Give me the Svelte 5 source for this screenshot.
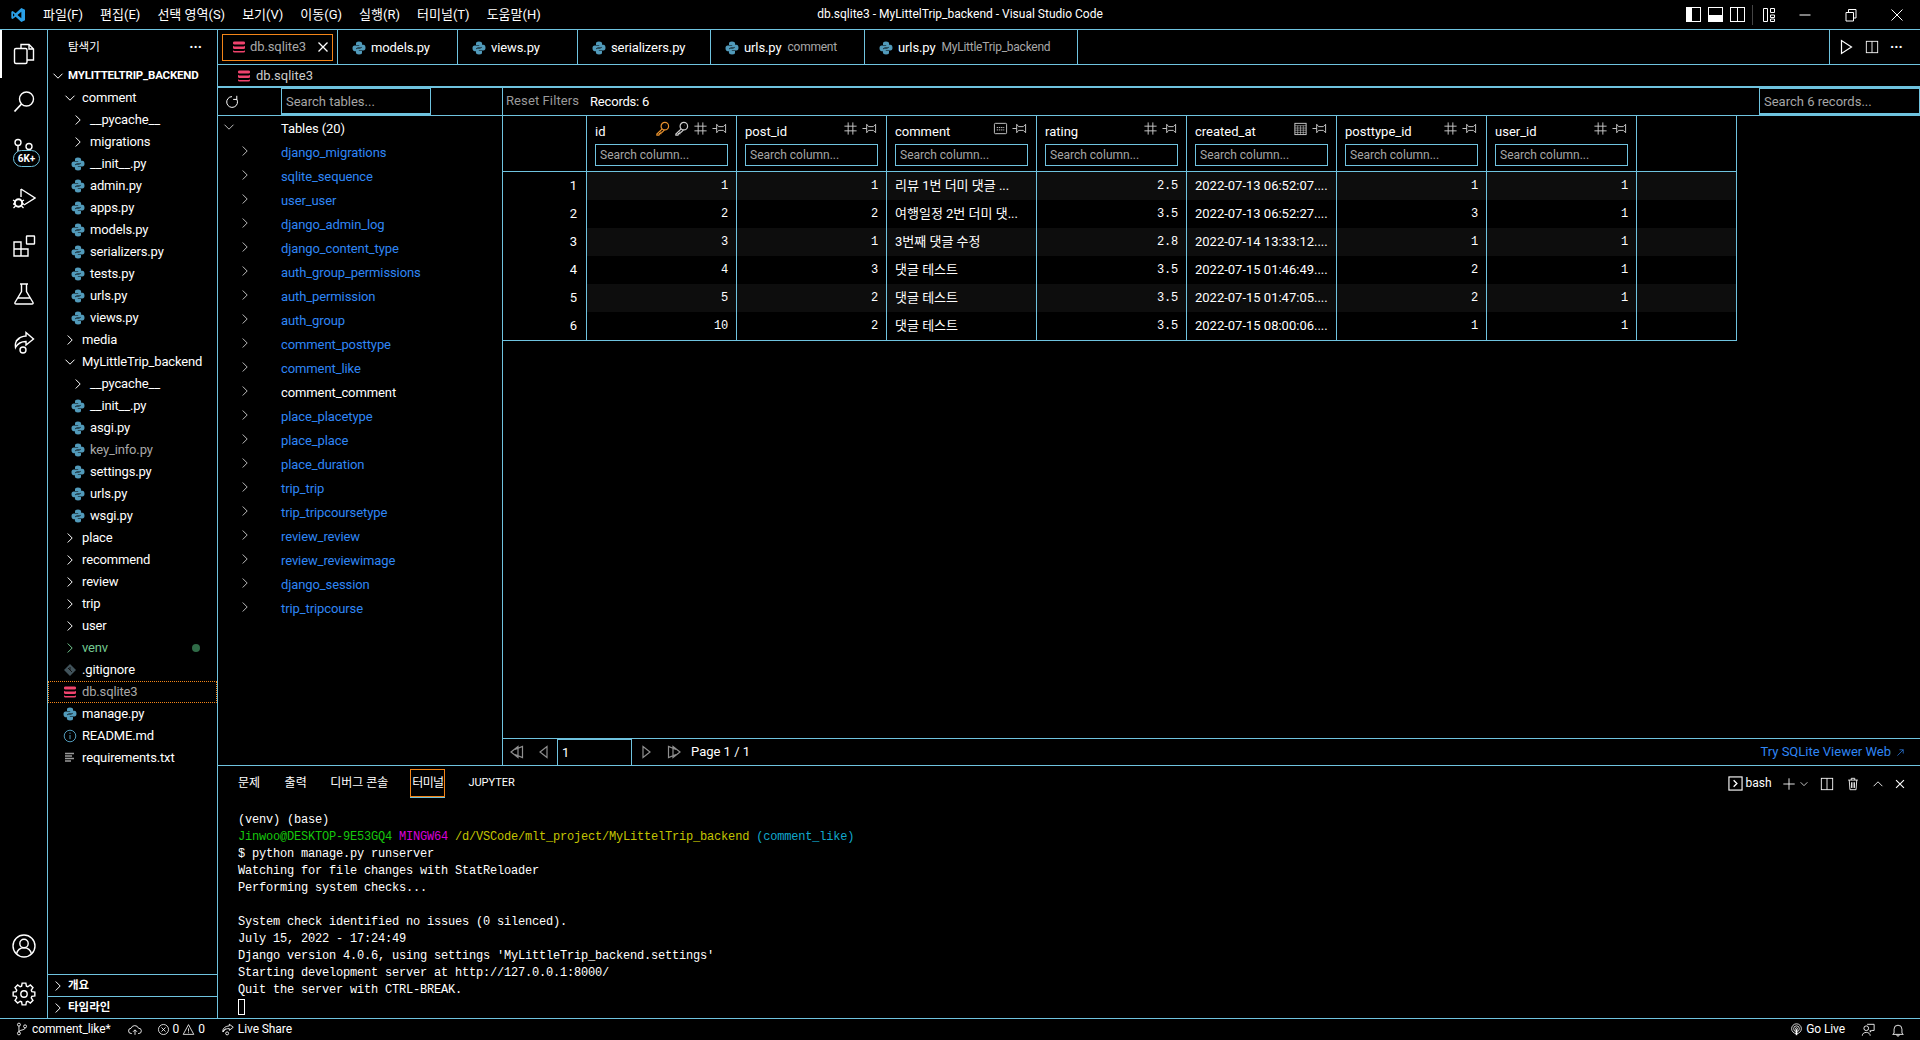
<script>
  const menus = ['파일(F)', '편집(E)', '선택 영역(S)', '보기(V)', '이동(G)', '실행(R)', '터미널(T)', '도움말(H)'];
  const tabs = [
    { name: 'models.py', w: 120 },
    { name: 'views.py', w: 120 },
    { name: 'serializers.py', w: 133 },
    { name: 'urls.py', sub: 'comment', w: 154 },
    { name: 'urls.py', sub: 'MyLittleTrip_backend', w: 213 }
  ];
  const files = [
    ['comment', 1, 'open'], ['__pycache__', 2, 'closed'], ['migrations', 2, 'closed'],
    ['__init__.py', 2, 'py'], ['admin.py', 2, 'py'], ['apps.py', 2, 'py'], ['models.py', 2, 'py'],
    ['serializers.py', 2, 'py'], ['tests.py', 2, 'py'], ['urls.py', 2, 'py'], ['views.py', 2, 'py'],
    ['media', 1, 'closed'], ['MyLittleTrip_backend', 1, 'open'], ['__pycache__', 2, 'closed'],
    ['__init__.py', 2, 'py'], ['asgi.py', 2, 'py'], ['key_info.py', 2, 'py', 'dim'], ['settings.py', 2, 'py'],
    ['urls.py', 2, 'py'], ['wsgi.py', 2, 'py'], ['place', 1, 'closed'], ['recommend', 1, 'closed'],
    ['review', 1, 'closed'], ['trip', 1, 'closed'], ['user', 1, 'closed'], ['venv', 1, 'closed', 'venv'],
    ['.gitignore', 1, 'git'], ['db.sqlite3', 1, 'db', 'sel'], ['manage.py', 1, 'py'],
    ['README.md', 1, 'info'], ['requirements.txt', 1, 'lines']
  ];
  const tables = ['django_migrations', 'sqlite_sequence', 'user_user', 'django_admin_log', 'django_content_type',
    'auth_group_permissions', 'auth_permission', 'auth_group', 'comment_posttype', 'comment_like', 'comment_comment',
    'place_placetype', 'place_place', 'place_duration', 'trip_trip', 'trip_tripcoursetype', 'review_review',
    'review_reviewimage', 'django_session', 'trip_tripcourse'];
  const columns = [
    { name: 'id', icons: ['keyo', 'key', 'hash'] }, { name: 'post_id', icons: ['hash'] },
    { name: 'comment', icons: ['abc'] }, { name: 'rating', icons: ['hash'] },
    { name: 'created_at', icons: ['cal'] }, { name: 'posttype_id', icons: ['hash'] }, { name: 'user_id', icons: ['hash'] }
  ];
  const rows = [
    ['1', '1', '리뷰 1번 더미 댓글 ...', '2.5', '2022-07-13 06:52:07....', '1', '1'],
    ['2', '2', '여행일정 2번 더미 댓...', '3.5', '2022-07-13 06:52:27....', '3', '1'],
    ['3', '1', '3번째 댓글 수정', '2.8', '2022-07-14 13:33:12....', '1', '1'],
    ['4', '3', '댓글 테스트', '3.5', '2022-07-15 01:46:49....', '2', '1'],
    ['5', '2', '댓글 테스트', '3.5', '2022-07-15 01:47:05....', '2', '1'],
    ['10', '2', '댓글 테스트', '3.5', '2022-07-15 08:00:06....', '1', '1']
  ];
  const isText = (c) => c === 2 || c === 4;
  const gear = (() => {
    let d = '';
    for (let i = 0; i < 8; i++) {
      const a = (i * Math.PI) / 4;
      const p = (r, o) => `${(12 + r * Math.cos(a + o)).toFixed(2)} ${(12 + r * Math.sin(a + o)).toFixed(2)}`;
      d += `${i ? 'L' : 'M'}${p(8.2, -0.3)}L${p(11, -0.17)}L${p(11, 0.17)}L${p(8.2, 0.3)}`;
    }
    return d + 'Z';
  })();
</script>

{#snippet ic(name, size = 16)}
  <svg class="ic" width={size} height={size} viewBox="0 0 16 16">
    {#if name === 'right'}<path d="M5.700 3.500 10.200 8l-4.500 4.500"/>
    {:else if name === 'down'}<path d="M3.500 5.700 8 10.200l4.500-4.500"/>
    {:else if name === 'up'}<path d="M3 10.500 8 5.500l5 5"/>
    {:else if name === 'x'}<path d="m3.500 3.500 9 9m0-9-9 9" stroke-width="1.300"/>
    {:else if name === 'py'}
      <g class="solid py"><path d="M8 1.500c-2.700 0-3 1-3 2V5h3.200v.6H3.600c-1.300 0-2.100 1-2.100 2.700s.8 2.900 2.100 2.900H5V9.600c0-1.100.9-2 2-2h2.400c1 0 1.700-.7 1.700-1.600V3.500c0-1.200-1.200-2-3.100-2z"/><path transform="rotate(180 8 8)" d="M8 1.500c-2.700 0-3 1-3 2V5h3.200v.6H3.600c-1.300 0-2.100 1-2.100 2.700s.8 2.900 2.100 2.900H5V9.600c0-1.100.9-2 2-2h2.400c1 0 1.700-.7 1.700-1.600V3.500c0-1.200-1.200-2-3.100-2z"/></g>
    {:else if name === 'db'}
      <g class="solid db"><path d="M3.500 2.500h9q1.500 0 1.500 1v1q0 1-1.500 1h-9Q2 5.500 2 4.500v-1q0-1 1.500-1zM2 6.800q.6.700 1.500.7h9q.9 0 1.500-.7v2.200q0 .9-1.500.9h-9Q2 9.900 2 9zM2 11.200q.6.700 1.500.7h9q.9 0 1.500-.7v1.300q0 1-1.500 1h-9Q2 13.500 2 12.500z"/></g>
    {:else if name === 'git'}
      <g class="solid gitc"><path d="M8 2 14 8 8 14 2 8z"/></g><path d="M6 6l4 4M8 8V5" stroke="#111"/>
    {:else if name === 'info'}
      <g class="infoc"><circle cx="8" cy="8" r="5.800"/><path d="M8 7v4.200M8 4.600v1.200"/></g>
    {:else if name === 'lines'}
      <path class="linesc" d="M3 3.500h9M3 6h7M3 8.500h9M3 11h6" stroke-width="1.300"/>
    {:else if name === 'refresh'}<path d="M12.600 5A5.400 5.400 0 1 1 8 2.600M12.800 1.800V5.400H9.200" />
    {:else if name === 'hash'}<path d="M5.500 1.500v13M10.500 1.500v13M1.500 5.500h13M1.500 10.500h13"/>
    {:else if name === 'pin'}<path d="M.5 8H5M5 3.500 7 6h5l2.500-2.500v9L12 10H7l-2 2.500z"/>
    {:else if name === 'key' || name === 'keyo'}
      <g class={name === 'keyo' ? 'orange' : ''} stroke-width="1.300"><circle cx="10.500" cy="5.500" r="4"/><path d="M7.700 8.400 2 14v1h2.200l.6-1.500h1.500V12h1.500L10 9.500"/><path d="M11.500 4.500h.2"/></g>
    {:else if name === 'abc'}
      <rect x="1.500" y="2.500" width="13" height="11" rx="1"/><path d="M4 9.500h8M4 7h8" stroke-dasharray="1.500 .8"/>
    {:else if name === 'cal'}
      <rect x="2" y="2.500" width="12" height="12"/><path d="M2 5h12M2 7.500h12M2 9.800h12M2 12.200h12M5 5v9.500M8 5v9.500M11 5v9.500" stroke-width=".6"/>
    {:else if name === 'split'}<rect x="1.500" y="1.500" width="13" height="13"/><path d="M8 1.500v13"/>
    {:else if name === 'play'}<path d="M3.500 1.500v13L13.500 8z" stroke-width="1.200"/>
    {:else if name === 'first'}<path d="M2 8 9 2.500v11zM6 5.500 13.500 2.500v11L6 10.500" stroke-width="1.200"/>
    {:else if name === 'prev'}<path d="M11 2.500 4 8l7 5.500z" stroke-width="1.200"/>
    {:else if name === 'next'}<path d="M5 2.500 12 8l-7 5.500z" stroke-width="1.200"/>
    {:else if name === 'last'}<path d="M14 8 7 2.500v11zM10 5.500 2.500 2.500v11l7.500-3" stroke-width="1.200"/>
    {:else if name === 'term'}<rect x="1" y="1" width="14" height="14" stroke-width="1.200"/><path d="m6 4.500 3.500 3.500L6 11.500" stroke-width="1.400"/>
    {:else if name === 'plus'}<path d="M8 1.500v13M1.500 8h13"/>
    {:else if name === 'trash'}<path d="M2.500 3.500h11M6 3.500V1.500h4v2M3.700 3.500l.8 11h7l.8-11M6.300 6v6.500M8 6v6.500M9.700 6v6.500"/>
    {:else if name === 'branch'}<circle cx="4.500" cy="3" r="1.700"/><circle cx="4.500" cy="13" r="1.700"/><circle cx="11.500" cy="5" r="1.700"/><path d="M4.500 4.700v6.600M11.500 6.700c0 3-7 2-7 4.600"/>
    {:else if name === 'cloud'}<path d="M4.500 12H3.800A3 3 0 0 1 3.500 6 4.500 4.500 0 0 1 12 6a3 3 0 0 1 .5 6h-1M8 13.500V8M5.800 10 8 7.800l2.200 2.200"/>
    {:else if name === 'err'}<circle cx="8" cy="8" r="6.200"/><path d="m5.500 5.500 5 5m0-5-5 5"/>
    {:else if name === 'warn'}<path d="M8 2 14.500 14h-13zM8 6.500v4M8 11.500v1"/>
    {:else if name === 'share'}<path d="M9.500 2.500 14 6l-4.500 3.500V7.500C6 7.500 3.500 8.500 2 11c0-4 3-6.300 7.500-6.500zM5.600 7.800C4 8.500 3 10 2.500 11.500"/><circle cx="7" cy="13" r="1.700"/>
    {:else if name === 'golive'}<circle cx="8" cy="7" r="6"/><circle cx="8" cy="7" r="3.500"/><circle cx="8" cy="7" r="1.200"/><path d="M8 8v7" stroke-width="2"/>
    {:else if name === 'feedback'}<circle cx="6" cy="6" r="2.700"/><path d="M1.500 14.500c0-5 9-5 9 0M7 1.500h8v7h-3l-1.500 2V8"/>
    {:else if name === 'bell'}<path d="M3.500 11.500V7a4.500 4.500 0 0 1 9 0v4.500l1.500 1.500H2zM6.500 13.500a1.500 1.500 0 0 0 3 0"/>
    {:else if name === 'ext'}<path d="M3.500 12.500 12 4M6.500 4H12v5.500"/>
    {/if}
  </svg>
{/snippet}

{#snippet big(name)}
  <svg class="ic bigic" width="24" height="24" viewBox="0 0 24 24">
    {#if name === 'files'}<path d="M9 6V2.500h8l4.500 4.500v11H15M17 2.500V7h4.500"/><rect x="2.500" y="6.500" width="12.500" height="15" rx="1.500"/>
    {:else if name === 'search'}<circle cx="14.500" cy="9" r="7"/><path d="M9.500 14 2.500 21.500" stroke-width="1.800"/>
    {:else if name === 'scm'}<circle cx="6" cy="4.500" r="3"/><circle cx="17" cy="8.500" r="3"/><path d="M6 7.500v8"/>
    {:else if name === 'debug'}<path d="M9 3v8M9 3l14 9-11 7"/><circle cx="6.500" cy="17" r="3.700" stroke-width="2"/><path d="M1 14l2.500 1.500M1 18h2M1.500 22 3.500 20M12 14l-2.500 1.500M12 18h-2M11.500 22l-2-2" stroke-width="1.300"/>
    {:else if name === 'ext'}<path d="M2 8h7v14H2zM2 15h14v7H9"/><rect x="14.500" y="2" width="8" height="8" rx=".5"/>
    {:else if name === 'test'}<path d="M8 2h8M9.500 2v7.500L3 20.500q-.5 1.500 1 1.500h16q1.500 0 1-1.500L14.500 9.500V2M6 16h12"/>
    {:else if name === 'live'}<path d="M14 2.500 21.500 9 14 15v-3.500c-5 0-8 1.500-10.500 6C2.500 11 6.500 6.500 14 6z"/><circle cx="11" cy="20" r="3"/><path d="M7.500 8.500 4 11"/>
    {:else if name === 'account'}<circle cx="12" cy="12" r="11"/><circle cx="12" cy="9.500" r="4.200"/><path d="M4.500 20c1-4.500 4-6.300 7.500-6.300s6.500 1.800 7.500 6.300"/>
    {:else if name === 'gear'}<path d={gear}/><circle cx="12" cy="12" r="3.200"/>
    {/if}
  </svg>
{/snippet}

<div class="app">
  <header class="titlebar">
    <div class="menus">
      <svg class="logo" width="16" height="16" viewBox="0 0 24 24"><path fill-rule="evenodd" d="M17 1.500 22.500 4v16L17 22.500 8.500 14.500 4 18l-2-1V7l2-1 4.500 3.500zM17 7l-5.800 5 5.800 5zM4.500 9.500v5L7 12z"/></svg>
      <nav>{#each menus as m}<span>{m}</span>{/each}</nav>
    </div>
    <div class="wintitle">db.sqlite3 - MyLittelTrip_backend - Visual Studio Code</div>
    <div class="winctl">
      <span class="lay"><i class="fill-l"></i></span><span class="lay"><i class="fill-b"></i></span><span class="lay"><i class="mid"></i></span>
      <b class="sep"></b>
      <svg class="ic" width="14" height="16" viewBox="0 0 14 16"><path d="M1.500 1.500h4v13h-4zM8.500 1.500h4v4h-4zM8.500 8h4v2.500h-4zM8.500 12h4v2.500h-4z"/></svg>
      <svg class="ic mn" width="14" height="14" viewBox="0 0 14 14"><path d="M1.500 7h11"/></svg>
      <svg class="ic mn2" width="14" height="14" viewBox="0 0 14 14"><path d="M2 4.500h7.500V13H2zM4.500 4.500V1.500H12V10H9.500"/></svg>
      <svg class="ic mn2" width="14" height="14" viewBox="0 0 14 14"><path d="m1.500 1.500 11 11m0-11-11 11"/></svg>
    </div>
  </header>

  <div class="main">
    <aside class="activity">
      <div class="act active">{@render big('files')}</div>
      <div class="act">{@render big('search')}</div>
      <div class="act">{@render big('scm')}<span class="badge">6K+</span></div>
      <div class="act">{@render big('debug')}</div>
      <div class="act">{@render big('ext')}</div>
      <div class="act">{@render big('test')}</div>
      <div class="act">{@render big('live')}</div>
      <div class="grow"></div>
      <div class="act">{@render big('account')}</div>
      <div class="act">{@render big('gear')}</div>
    </aside>

    <aside class="sidebar">
      <div class="sb-head"><span>탐색기</span><span class="dots">···</span></div>
      <div class="tree">
        <div class="row root">{@render ic('down')}<span>MYLITTELTRIP_BACKEND</span></div>
        {#each files as f}
          <div class="row d{f[1]} {f[3] ?? ''}">
            {#if f[2] === 'open'}{@render ic('down')}{:else if f[2] === 'closed'}{@render ic('right')}{:else}{@render ic(f[2])}{/if}
            <span>{f[0]}</span>
            {#if f[3] === 'venv'}<i class="dot"></i>{/if}
          </div>
        {/each}
      </div>
      <div class="section">{@render ic('right')}<span>개요</span></div>
      <div class="section">{@render ic('right')}<span>타임라인</span></div>
    </aside>

    <section class="workbench">
      <div class="tabbar">
        <div class="tab active"><div class="tabbox">{@render ic('db')}<span>db.sqlite3</span>{@render ic('x')}</div></div>
        {#each tabs as t}
          <div class="tab" style="width:{t.w}px">{@render ic('py')}<span>{t.name}</span>{#if t.sub}<em>{t.sub}</em>{/if}</div>
        {/each}
        <div class="grow"></div>
        <div class="tabacts">{@render ic('play')}{@render ic('split', 14)}<span class="dots">···</span></div>
      </div>
      <div class="crumbs">{@render ic('db')}<span>db.sqlite3</span></div>

      <div class="viewer">
        <div class="toolbar">
          <div class="tb-left">
            {@render ic('refresh')}
            <input class="search-t" placeholder="Search tables..." />
          </div>
          <div class="tb-right">
            <span class="reset">Reset Filters</span>
            <span class="records">Records: 6</span>
            <div class="grow"></div>
            <input class="search-r" placeholder="Search 6 records..." />
          </div>
        </div>

        <div class="vbody">
          <div class="tablelist">
            <div class="trow head">{@render ic('down')}<span>Tables (20)</span></div>
            {#each tables as t}
              <div class="trow">{@render ic('right')}<span class:cur={t === 'comment_comment'}>{t}</span></div>
            {/each}
          </div>
          <div class="datapane">
            <div class="gridwrap">
              <div class="grid">
                <div class="hc first"></div>
                {#each columns as c}
                  <div class="hc">
                    <div class="hname"><span>{c.name}</span><div class="hicons">{#each c.icons as i}{@render ic(i, 15)}{/each}{@render ic('pin', 15)}</div></div>
                    <input placeholder="Search column..." />
                  </div>
                {/each}
                <div class="hc last"></div>
                {#each rows as r, i}
                  <div class="c num">{i + 1}</div>
                  {#each r as v, c}
                    <div class="c" class:odd={i % 2 === 0} class:txt={isText(c)} class:mono={!isText(c)}>{v}</div>
                  {/each}
                  <div class="c last" class:odd={i % 2 === 0}></div>
                {/each}
              </div>
            </div>
            <div class="pager">
              {@render ic('first')}{@render ic('prev')}
              <input value="1" />
              {@render ic('next')}{@render ic('last')}
              <span class="pg">Page 1 / 1</span>
              <div class="grow"></div>
              <span class="try">Try SQLite Viewer Web {@render ic('ext', 11)}</span>
            </div>
          </div>
        </div>
      </div>

      <div class="panel">
        <div class="ptabs">
          <span>문제</span><span>출력</span><span>디버그 콘솔</span><span class="on">터미널</span><span class="jup">JUPYTER</span>
          <div class="grow"></div>
          <div class="pacts">
            {@render ic('term', 15)}<span class="bash">bash</span>{@render ic('plus', 14)}{@render ic('down', 12)}{@render ic('split', 14)}{@render ic('trash', 14)}{@render ic('up', 14)}{@render ic('x', 14)}
          </div>
        </div>
<pre class="term">(venv) (base)
<span class="g">Jinwoo@DESKTOP-9E53GQ4</span> <span class="m">MINGW64</span> <span class="y">/d/VSCode/mlt_project/MyLittelTrip_backend</span> <span class="c2">(comment_like)</span>
$ python manage.py runserver
Watching for file changes with StatReloader
Performing system checks...

System check identified no issues (0 silenced).
July 15, 2022 - 17:24:49
Django version 4.0.6, using settings 'MyLittleTrip_backend.settings'
Starting development server at http://127.0.0.1:8000/
Quit the server with CTRL-BREAK.
<i class="cursor"></i></pre>
      </div>
    </section>
  </div>

  <footer class="status">
    <span class="st br">{@render ic('branch', 14)}comment_like*</span>
    <span class="st cl">{@render ic('cloud', 14)}</span>
    <span class="st er">{@render ic('err', 13)}0{@render ic('warn', 13)}0</span>
    <span class="st ls">{@render ic('share', 14)}Live Share</span>
    <div class="grow"></div>
    <span class="st gl">{@render ic('golive', 13)}Go Live</span>
    <span class="st fb">{@render ic('feedback', 14)}</span>
    <span class="st bl">{@render ic('bell', 14)}</span>
  </footer>
</div>

<style>
  :global(body) { margin: 0; background: #000; }
  * { box-sizing: border-box; }
  .app {
    width: 1920px; height: 1040px; background: #000; color: #fff; overflow: hidden;
    display: flex; flex-direction: column;
    font: 13px/1.2 Roboto, "Noto Sans CJK KR", sans-serif;
    --b: #6fc3df; --o: #f38518; --dim: #9a9a9a; --link: #2f86f5;
  }
  .grow { flex: 1; }
  .ic { fill: none; stroke: currentColor; stroke-width: 1; flex: none; display: block; }
  .bigic { stroke-width: 1.400; }
  .solid { stroke: none; }
  .py { fill: #519aba; }
  .db { fill: #f0436d; }
  .gitc { fill: #41535b; }
  .infoc { stroke: #519aba; }
  .linesc { stroke: #9a9a9a; }
  .orange { stroke: #e8912d; }
  input {
    font: inherit; color: #fff; background: #000; border: 1px solid var(--b); outline: none; padding: 0 4px; min-width: 0;
  }
  input::placeholder { color: #a6a6a6; opacity: 1; }

  .titlebar {
    height: 30px; flex: none; border-bottom: 1px solid var(--b);
    display: grid; grid-template-columns: 1fr auto 1fr; align-items: center; font-size: 12px;
  }
  .menus { display: flex; align-items: center; padding-left: 10px; }
  .logo { fill: #2aa0e8; flex: none; }
  nav { display: flex; margin-left: 17px; gap: 17px; white-space: nowrap; font-size: 13px; }
  .wintitle { font-size: 12px; white-space: nowrap; }
  .winctl { display: flex; align-items: center; justify-content: flex-end; padding-right: 16px; }
  .lay { width: 15px; height: 15px; border: 1px solid #fff; margin-right: 7px; position: relative; display: block; }
  .lay i { position: absolute; background: #fff; display: block; }
  .fill-l { left: 0; top: 0; bottom: 0; width: 5px; }
  .fill-b { left: 0; right: 0; bottom: 0; height: 6px; }
  .mid { left: 6px; top: 0; bottom: 0; width: 1px; }
  .sep { width: 1px; height: 20px; background: #444; margin: 0 9px 0 0; }
  .mn { margin-left: 22px; }
  .mn2 { margin-left: 32px; }

  .main { flex: 1; display: flex; min-height: 0; }
  .activity { width: 48px; flex: none; border-right: 1px solid var(--b); display: flex; flex-direction: column; }
  .act { height: 48px; flex: none; display: flex; align-items: center; justify-content: center; position: relative; }
  .act.active { box-shadow: inset 2px 0 0 #fff; }
  .badge {
    position: absolute; left: 13px; top: 24px; width: 27px; height: 17px; border: 1px solid var(--b); border-radius: 9px;
    background: #000; font-size: 10px; font-weight: 700; line-height: 15px; text-align: center;
  }

  .sidebar { width: 170px; flex: none; border-right: 1px solid var(--b); display: flex; flex-direction: column; }
  .sb-head { height: 35px; flex: none; display: flex; justify-content: space-between; align-items: center; padding: 0 15px 0 20px; font-size: 11.500px; }
  .dots { font-weight: 700; letter-spacing: 0; font-size: 14px; }
  .tree { flex: 1; min-height: 0; }
  .row { height: 22px; display: flex; align-items: center; gap: 4px; white-space: nowrap; position: relative; letter-spacing: -.15px; }
  .root { padding-left: 2px; gap: 2px; font-weight: 700; font-size: 11.500px; letter-spacing: -.2px; }
  .d1 { padding-left: 14px; }
  .d2 { padding-left: 22px; }
  .dim { color: #a8a8a8; }
  .venv { color: #73c991; }
  .sel { outline: 1px dotted var(--o); outline-offset: -1px; color: #a8a8a8; }
  .dot { position: absolute; left: 144px; top: 7px; width: 8px; height: 8px; border-radius: 50%; background: #2f6b47; }
  .section { height: 22px; flex: none; border-top: 1px solid var(--b); display: flex; align-items: center; padding-left: 2px; gap: 2px; font-size: 11.500px; font-weight: 700; }

  .workbench { flex: 1; min-width: 0; display: flex; flex-direction: column; }
  .tabbar { height: 35px; flex: none; border-bottom: 1px solid var(--b); display: flex; }
  .tab { flex: none; display: flex; align-items: center; border-right: 1px solid var(--b); padding: 1px 0 0 13px; gap: 4px; white-space: nowrap; letter-spacing: -.1px; }
  .tab.active { width: 120px; padding: 4px; }
  .tabbox { width: 111px; height: 27px; border: 1px solid var(--o); display: flex; align-items: center; padding-left: 8px; gap: 3px; color: #a8a8a8; }
  .tabbox span { flex: 1; }
  .tabbox .ic:last-child { color: #fff; margin-right: 1px; }
  .tab em { font-style: normal; font-size: 12px; color: #a8a8a8; margin-left: 2px; letter-spacing: -.25px; }
  .tabacts { width: 91px; border-left: 1px solid var(--b); display: flex; align-items: center; gap: 11px; padding-left: 8px; }
  .crumbs { height: 21px; flex: none; display: flex; align-items: center; padding-left: 18px; gap: 4px; font-size: 13px; color: #ccc; }

  .viewer { flex: 1; min-height: 0; display: flex; flex-direction: column; border-top: 2px solid var(--b); }
  .toolbar { height: 28px; flex: none; border-bottom: 1px solid var(--b); display: flex; }
  .tb-left { width: 285px; flex: none; border-right: 1px solid var(--b); display: flex; align-items: center; padding-left: 6px; }
  .search-t { width: 150px; height: 27px; margin-left: 41px; border-bottom-width: 2px; }
  .tb-right { flex: 1; display: flex; align-items: center; }
  .reset { margin-left: 3px; color: var(--dim); letter-spacing: .1px; position: relative; top: -1px; }
  .records { margin-left: 11px; font-size: 13px; letter-spacing: -.2px; }
  .search-r { width: 161px; height: 27px; border-bottom-width: 2px; }

  .vbody { flex: 1; min-height: 0; display: flex; }
  .tablelist { width: 285px; flex: none; border-right: 1px solid var(--b); padding-top: 1px; }
  .trow { height: 24px; display: flex; align-items: center; white-space: nowrap; padding-left: 19px; color: var(--link); letter-spacing: -.1px; }
  .trow .ic { color: #bbb; margin-right: 28px; position: relative; top: -2px; }
  .trow.head { padding-left: 3px; color: #fff; }
  .trow.head .ic { margin-right: 44px; }
  .cur { color: #fff; }

  .datapane { flex: 1; min-width: 0; display: flex; flex-direction: column; }
  .gridwrap { flex: 1; min-height: 0; }
  .grid { display: grid; grid-template-columns: 84px repeat(7, 150px) 100px; width: max-content; border-bottom: 1px solid var(--b); }
  .hc { height: 56px; border-right: 1px solid var(--b); border-bottom: 1px solid var(--b); padding: 0 8px; }
  .hname { height: 28px; display: flex; align-items: flex-start; justify-content: space-between; padding-top: 7px; }
  .hname span { font-size: 13px; line-height: 18px; }
  .hicons { display: flex; align-items: center; gap: 4px; color: #ccc; margin-top: -2px; margin-right: 1px; }
  .hc input { width: 133px; height: 22px; font-size: 12px; padding: 0 4px; display: block; }
  .c { height: 28px; line-height: 28px; border-right: 1px solid var(--b); padding: 0 8px; text-align: right; white-space: nowrap; overflow: hidden; }
  .c.odd { background: #0d0d0d; }
  .num { padding-right: 9px; }
  .txt { text-align: left; padding-left: 8px; }
  .mono { font: 400 12px/28px "Liberation Mono", monospace; letter-spacing: -.2px; }

  .pager { height: 27px; flex: none; border-top: 1px solid var(--b); display: flex; align-items: center; color: #8f8f8f; }
  .pager > .ic { margin-left: 6px; }
  .pager > .ic:nth-child(2) { margin-left: 11px; margin-right: 5px; }
  .pager > .ic:nth-child(4) { margin-left: 6px; }
  .pager > .ic:nth-child(5) { margin-left: 12px; }
  .pager input { width: 75px; height: 26px; border-bottom: 0; background: #000; }
  .pg { color: #fff; margin-left: 9px; }
  .try { color: var(--link); display: flex; align-items: center; gap: 4px; margin-right: 14px; }

  .panel { height: 253px; flex: none; border-top: 1px solid var(--b); display: flex; flex-direction: column; }
  .ptabs { height: 46px; flex: none; display: flex; align-items: flex-start; padding-left: 20px; font-size: 12px; }
  .ptabs > span { margin-right: 22px; height: 28px; line-height: 28px; margin-top: 3px; white-space: nowrap; }
  .ptabs > span:nth-child(1) { margin-right: 24.500px; }
  .ptabs > span:nth-child(2) { margin-right: 23.500px; }
  .ptabs .on { border: 1px solid var(--o); box-shadow: 0 1px 0 var(--b); width: 35px; text-align: center; line-height: 26px; letter-spacing: -.6px; margin-right: 23px; }
  .ptabs .jup { font-size: 11px; }
  .pacts { display: flex; align-items: center; height: 35px; padding-right: 13px; }
  .pacts .ic:nth-of-type(3) { margin-left: 2.500px; }
  .bash { font-size: 12px; margin: 0 10px 0 2.500px; }
  .pacts .ic:nth-of-type(4) { margin: 0 12px 0 10px; }
  .pacts .ic:nth-of-type(5) { margin-right: 11px; }
  .pacts .ic:nth-of-type(6) { margin-right: 8px; }
  .term { margin: 0; padding-left: 20px; font: 12px/17px "Liberation Mono", monospace; letter-spacing: -.2px; }
  .g { color: #16c60c; }
  .m { color: #d600d6; }
  .y { color: #c4c400; }
  .c2 { color: #11a8cd; }
  .cursor { display: inline-block; width: 7px; height: 16px; border: 1px solid #fff; vertical-align: top; }

  .status { height: 22px; flex: none; border-top: 1px solid var(--b); display: flex; align-items: center; font-size: 12px; letter-spacing: -.1px; white-space: nowrap; }
  .st { display: flex; align-items: center; gap: 3px; }
  .br { margin-left: 15px; }
  .cl { margin-left: 17px; }
  .er { margin-left: 15px; gap: 3px; }
  .ls { margin-left: 16px; }
  .fb { margin-left: 16px; }
  .bl { margin-left: 16px; margin-right: 15px; }
</style>
